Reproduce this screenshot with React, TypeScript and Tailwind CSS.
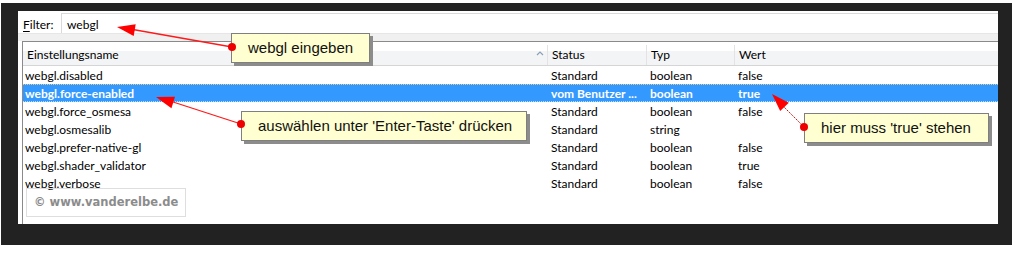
import React from "react";

const rows = [
  { name: "webgl.disabled", status: "Standard", type: "boolean", value: "false" },
  { name: "webgl.force-enabled", status: "vom Benutzer ...", type: "boolean", value: "true", selected: true },
  { name: "webgl.force_osmesa", status: "Standard", type: "boolean", value: "false" },
  { name: "webgl.osmesalib", status: "Standard", type: "string", value: "" },
  { name: "webgl.prefer-native-gl", status: "Standard", type: "boolean", value: "false" },
  { name: "webgl.shader_validator", status: "Standard", type: "boolean", value: "true" },
  { name: "webgl.verbose", status: "Standard", type: "boolean", value: "false" },
];

const uiFont = "font-['Lato',sans-serif] text-[12px] leading-[14px]";

function Callout({ className, text }: { className: string; text: string }) {
  return (
    <div
      className={`absolute h-[30px] flex items-center bg-[#ffffd2] border border-[#7f7f7f] shadow-[3px_3px_0_#8c8c8c] font-['Liberation_Sans',Arial,sans-serif] text-[15px] text-[#111] whitespace-nowrap ${className}`}
    >
      {text}
    </div>
  );
}

export default function App() {
  return (
    <div className="relative w-[1022px] h-[257px] bg-white pt-[3px] pl-[1px] overflow-hidden">
      {/* dark frame */}
      <div className="w-[1011px] h-[242px] bg-[#222222] pt-[8px] pl-[17px]">
        <div className={`w-[980px] h-[213px] bg-white flex flex-col ${uiFont} text-black`}>
          {/* Filter row */}
          <div className="h-[22px] flex items-stretch">
            <div className="w-[43px] pl-[5px] flex items-center pt-[5px]">
              <span>
                <span className="underline underline-offset-2">F</span>ilter:
              </span>
            </div>
            <div className="flex-1 mt-[2px] pt-[2px] border-t border-l border-[#d9d9d9] bg-white flex items-center pl-[5px]">
              webgl
            </div>
          </div>
          <div className="h-[8px] bg-[#f0f0f0] border-t border-[#e6e6e6]" />

          {/* Table */}
          <div className="flex-1 ml-[4px] border-l border-t border-[#8a8a8a] flex flex-col">
            <div className="h-[24px] pt-[3px] flex border-b border-[#d5d5d5] bg-[linear-gradient(to_bottom,#ffffff_0%,#ffffff_38%,#f3f4f6_40%,#f3f4f6_100%)]">
              <div className="w-[525px] pl-[4px] flex items-center justify-between pr-[3px] border-r border-[#e3e3e3]">
                <span>Einstellungsname</span>
                <svg width="8" height="5" viewBox="0 0 8 5" className="mb-[3px]">
                  <path d="M1 4 L4 1 L7 4" fill="none" stroke="#8aa0b8" strokeWidth="1.2" />
                </svg>
              </div>
              <div className="w-[99px] pl-[4px] flex items-center border-r border-[#e3e3e3]">Status</div>
              <div className="w-[88px] pl-[4px] flex items-center border-r border-[#e3e3e3]">Typ</div>
              <div className="flex-1 pl-[4px] flex items-center">Wert</div>
            </div>
            {rows.map((r) => (
              <div
                key={r.name}
                className={`h-[18px] pt-[2px] flex items-center whitespace-nowrap ${
                  r.selected
                    ? "bg-[#3399ff] text-white font-bold border-t border-b border-dotted border-t-[#e8c98a] border-b-[#b8dcff]"
                    : ""
                }`}
              >
                <div className="w-[525px] pl-[2px] overflow-hidden">{r.name}</div>
                <div className="w-[99px] pl-[3px] overflow-hidden">{r.status}</div>
                <div className="w-[88px] pl-[3px] overflow-hidden">{r.type}</div>
                <div className="flex-1 pl-[3px]">{r.value}</div>
              </div>
            ))}
          </div>
        </div>
      </div>

      {/* watermark */}
      <div className="absolute left-[26px] top-[188px] w-[160px] h-[29px] border border-[#dedede] flex items-center pl-[7px] font-['DejaVu_Sans',Verdana,sans-serif] font-bold text-[11.5px] text-[#8c8c8c] whitespace-nowrap">
        © www.vanderelbe.de
      </div>

      {/* callouts */}
      <Callout className="left-[231px] top-[33px] w-[139px] pl-[16px]" text="webgl eingeben" />
      <Callout className="left-[241px] top-[111px] w-[286px] pl-[16px]" text="auswählen unter 'Enter-Taste' drücken" />
      <Callout className="left-[804px] top-[113px] w-[185px] pl-[16px]" text="hier muss 'true' stehen" />

      <svg className="absolute left-0 top-0 pointer-events-none" width="1022" height="257">
        <line x1="232" y1="47" x2="130" y2="29" stroke="#ff1a1a" strokeWidth="1.3" />
        <polygon points="117,27 133.7,36 135.7,24.2" fill="#ff0000" />
        <circle cx="232" cy="47" r="4" fill="#ee0000" />

        <line x1="241" y1="124" x2="170" y2="101" stroke="#ff1a1a" strokeWidth="1.3" />
        <polygon points="156,97 171.4,108.2 175,96.8" fill="#ff0000" />
        <circle cx="241" cy="124" r="4" fill="#ee0000" />

        <line x1="804" y1="127" x2="782" y2="105" stroke="#e00000" strokeWidth="1" strokeDasharray="1.5 1" />
        <polygon points="772,94 780.2,111.1 788.8,102.7" fill="#ff0000" />
        <circle cx="804" cy="127" r="4" fill="#ee0000" />
      </svg>
    </div>
  );
}
